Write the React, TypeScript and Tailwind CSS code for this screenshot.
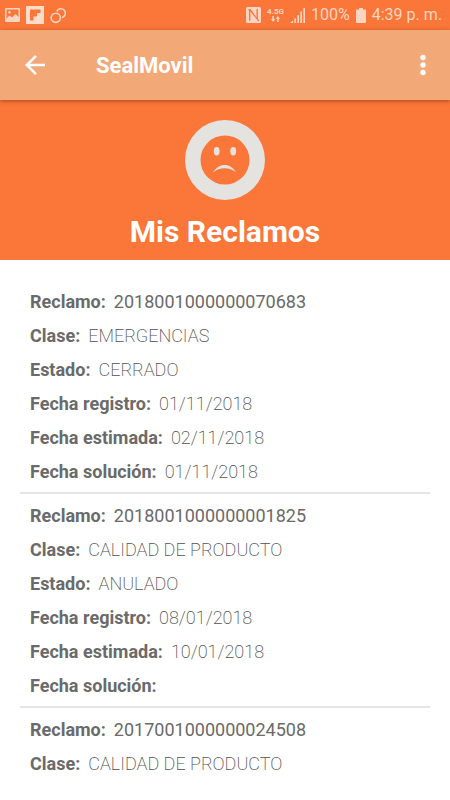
type Field = { label: string; value: string };

type Claim = { id: string; fields: Field[] };

const claims: Claim[] = [
  {
    id: "2018001000000070683",
    fields: [
      { label: "Clase:", value: "EMERGENCIAS" },
      { label: "Estado:", value: "CERRADO" },
      { label: "Fecha registro:", value: "01/11/2018" },
      { label: "Fecha estimada:", value: "02/11/2018" },
      { label: "Fecha solución:", value: "01/11/2018" },
    ],
  },
  {
    id: "2018001000000001825",
    fields: [
      { label: "Clase:", value: "CALIDAD DE PRODUCTO" },
      { label: "Estado:", value: "ANULADO" },
      { label: "Fecha registro:", value: "08/01/2018" },
      { label: "Fecha estimada:", value: "10/01/2018" },
      { label: "Fecha solución:", value: "" },
    ],
  },
  {
    id: "2017001000000024508",
    fields: [{ label: "Clase:", value: "CALIDAD DE PRODUCTO" }],
  },
];

export default function App() {
  return (
    <div className="min-h-screen bg-white font-['Roboto',sans-serif]">
      <StatusBar />
      <AppBar />

      <section className="flex flex-col items-center bg-[#fb7639] pt-5 pb-2">
        <SadFace />
        <h1 className="mt-3 text-[30px] leading-10 font-bold text-white">Mis Reclamos</h1>
      </section>

      <main className="px-5 pt-[25px]">
        {claims.map((claim) => (
          <ClaimItem key={claim.id} claim={claim} />
        ))}
      </main>
    </div>
  );
}

// ── Bars ──────────────────────────────────────────────────────────────────────

function StatusBar() {
  return (
    <div className="flex h-[30px] items-center justify-between bg-[#fb7639] pr-2 pl-[5px] text-[#fdd5c2]">
      <div className="flex items-center gap-[6px]">
        <svg width="15" height="14" viewBox="0 0 15 14" aria-hidden="true">
          <path
            fill="currentColor"
            fillRule="evenodd"
            d="M1 0h13a1 1 0 0 1 1 1v12a1 1 0 0 1-1 1H1a1 1 0 0 1-1-1V1a1 1 0 0 1 1-1zM1.500 1.500v9l3-3 2.500 2 3.500-3.500 3 3V1.500zM4.500 3a1.300 1.300 0 1 1 0 2.600 1.300 1.300 0 0 1 0-2.600z"
          />
        </svg>
        <svg width="18" height="18" viewBox="0 0 18 18" aria-hidden="true">
          <path fill="#fedccb" d="M0 0h18v18H0z" />
          <path fill="#fb7639" d="M4 3.500h10.500v3.500h-3.500v3.500H7.500v4H4z" />
        </svg>
        <svg width="17" height="17" viewBox="0 0 17 17" fill="none" stroke="currentColor" strokeWidth="1.600" aria-hidden="true">
          <circle cx="5.800" cy="10.800" r="4.600" />
          <path d="M6.800 4.300a4.500 4.500 0 1 1 5.400 6.200" />
        </svg>
      </div>

      <div className="flex items-center gap-[6px]">
        <svg width="15" height="16" viewBox="0 0 15 16" aria-hidden="true">
          <rect width="15" height="16" rx="1.500" fill="currentColor" />
          <path
            fill="#fb7639"
            d="M2 2.200h2.700l5.800 8.300V2h1.400v11.800L4.400 4.600v9.200H3V3.300H2zM10.700 12.400l1 1.500h1.400v-1.200z"
          />
        </svg>
        <div className="flex flex-col items-center">
          <span className="text-[8px] leading-[8px] font-bold">4.5G</span>
          <svg width="9" height="6" viewBox="0 0 9 6" fill="currentColor" aria-hidden="true">
            <path d="M1.300 0h1.600v3H4.200L2.100 6 0 3h1.300zM6.100 6h1.600V3H9L6.900 0 4.800 3h1.300z" />
          </svg>
        </div>
        <svg width="15" height="15" viewBox="0 0 15 15" fill="currentColor" aria-hidden="true">
          <path d="M0 15l3-2.500V15zM4.300 10.500H6V15H4.300zM7.300 7H9v8H7.300zM10.300 3.500H12V15h-1.700zM13.300 0H15v15h-1.700z" />
        </svg>
        <span className="text-base">100%</span>
        <svg width="10" height="15" viewBox="0 0 10 15" fill="currentColor" aria-hidden="true">
          <path d="M3 0h4v1.500h2a1 1 0 0 1 1 1V14a1 1 0 0 1-1 1H1a1 1 0 0 1-1-1V2.500a1 1 0 0 1 1-1h2z" />
        </svg>
        <span className="text-base">4:39 p. m.</span>
      </div>
    </div>
  );
}

function AppBar() {
  return (
    <header className="relative flex h-[70px] items-center bg-[#f2a877] pr-4 pl-6 text-white shadow-[0_1px_4px_rgba(110,40,0,0.6)]">
      <button type="button" aria-label="Atrás">
        <svg width="22" height="22" viewBox="0 0 22 22" fill="none" stroke="currentColor" strokeWidth="2.500" aria-hidden="true">
          <path d="M21 11H3M12 1.800 2.800 11l9.200 9.200" />
        </svg>
      </button>
      <span className="ml-[50px] flex-1 text-[22px] font-bold">SealMovil</span>
      <button type="button" aria-label="Más opciones" className="px-2">
        <svg width="6" height="22" viewBox="0 0 6 22" fill="currentColor" aria-hidden="true">
          <circle cx="3" cy="3.500" r="2.700" />
          <circle cx="3" cy="11" r="2.700" />
          <circle cx="3" cy="18.500" r="2.700" />
        </svg>
      </button>
    </header>
  );
}

function SadFace() {
  return (
    <svg width="80" height="80" viewBox="0 0 80 80" aria-hidden="true">
      <circle cx="40" cy="40" r="40" fill="#e5e3e0" />
      <circle cx="40" cy="40" r="24.500" fill="#fb7639" />
      <ellipse cx="31.700" cy="31.300" rx="2.900" ry="4.200" fill="#e5e3e0" />
      <ellipse cx="48.200" cy="31.300" rx="2.900" ry="4.200" fill="#e5e3e0" />
      <path fill="#e5e3e0" d="M28 52.500C31 47.500 35 45 39.600 45s8.600 2.500 11.600 7.500c-3.500-3-7.300-4.300-11.600-4.300S31.500 49.500 28 52.500z" />
    </svg>
  );
}

// ── Claims ────────────────────────────────────────────────────────────────────

function ClaimItem({ claim }: { claim: Claim }) {
  return (
    <dl className="mb-[5px] border-b-2 border-[#e4e4e4] px-[10px] pb-[3px] text-lg text-[#6a6a6a] last:border-b-0">
      <div className="flex h-[34px] items-center gap-2">
        <dt className="font-bold">Reclamo:</dt>
        <dd>{claim.id}</dd>
      </div>
      {claim.fields.map((f) => (
        <div key={f.label} className="flex h-[34px] items-center gap-2">
          <dt className="font-bold">{f.label}</dt>
          <dd className="font-extralight text-[#505050]">{f.value}</dd>
        </div>
      ))}
    </dl>
  );
}
